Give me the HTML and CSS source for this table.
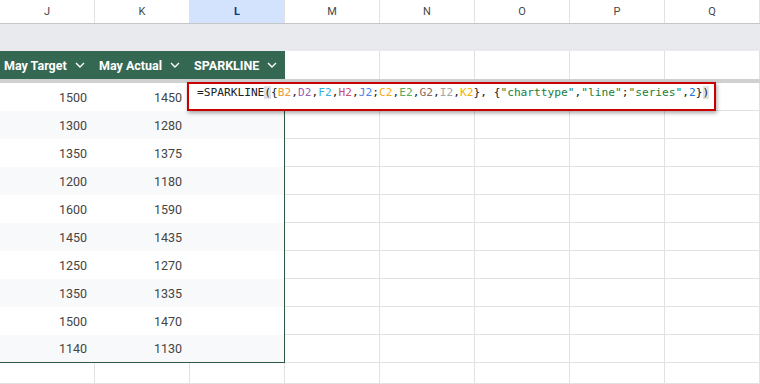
FILE: index.html
```html
<!doctype html>
<html lang="en">
<head>
  <meta charset="UTF-8">
  <title>Sparkline formula</title>
  <link rel="stylesheet" href="styles.css">
</head>
<body>
  <div class="sheet">
    <div class="col-heads">
      <div class="ch">J</div>
      <div class="ch">K</div>
      <div class="ch active">L</div>
      <div class="ch">M</div>
      <div class="ch">N</div>
      <div class="ch">O</div>
      <div class="ch">P</div>
      <div class="ch">Q</div>
    </div>
    <div class="band"></div>

    <div class="row head-row">
      <div class="th">May Target <svg class="chev" viewBox="0 0 10 6"><path d="M1 1l4 4 4-4"/></svg></div>
      <div class="th">May Actual <svg class="chev" viewBox="0 0 10 6"><path d="M1 1l4 4 4-4"/></svg></div>
      <div class="th last">SPARKLINE <svg class="chev" viewBox="0 0 10 6"><path d="M1 1l4 4 4-4"/></svg></div>
      <div class="c"></div><div class="c"></div><div class="c"></div><div class="c"></div><div class="c"></div>
    </div>
    <div class="freeze"></div>

    <div id="rows"></div>

    <div class="row tail-row">
      <div class="c"></div><div class="c"></div><div class="c"></div><div class="c"></div>
      <div class="c"></div><div class="c"></div><div class="c"></div><div class="c"></div>
    </div>

    <div class="editor">
      <span class="fn">=SPARKLINE</span><span class="hl">(</span>{<span class="r1">B2</span>,<span class="r2">D2</span>,<span class="r3">F2</span>,<span class="r4">H2</span>,<span class="r5">J2</span>;<span class="r6">C2</span>,<span class="r7">E2</span>,<span class="r8">G2</span>,<span class="r9">I2</span>,<span class="r10">K2</span>}, {<span class="str">"charttype"</span>,<span class="str">"line"</span>;<span class="str">"series"</span>,<span class="num">2</span>}<span class="hl">)</span>
    </div>
  </div>

  <script>
    const data = [
      [1500, 1450], [1300, 1280], [1350, 1375], [1200, 1180], [1600, 1590],
      [1450, 1435], [1250, 1270], [1350, 1335], [1500, 1470], [1140, 1130]
    ];
    const rows = document.getElementById("rows");

    data.forEach((d, i) => {
      const row = document.createElement("div");
      row.className = "row data-row" + (i % 2 ? " alt" : "") + (i === data.length - 1 ? " end" : "");
      row.innerHTML =
        `<div class="td">${d[0]}</div><div class="td">${d[1]}</div><div class="td last"></div>` +
        `<div class="c"></div><div class="c"></div><div class="c"></div><div class="c"></div><div class="c"></div>`;
      rows.appendChild(row);
    });
  </script>
</body>
</html>
```

FILE: styles.css
```css
* {
  margin: 0;
  padding: 0;
  box-sizing: border-box;
}
body {
  background: #fff;
  font-family: Roboto, "Liberation Sans", sans-serif;
  width: 760px;
  height: 384px;
  overflow: hidden;
}
.sheet {
  position: relative;
  width: 760px;
}
.col-heads {
  display: grid;
  grid-template-columns: repeat(8, 95px);
  height: 24px;
  border-bottom: 1px solid #c4c7c5;
}
.ch {
  display: flex;
  align-items: center;
  justify-content: center;
  border-right: 1px solid #e1e1e1;
  font-size: 11px;
  color: #444746;
}
.ch.active {
  background: #d3e3fd;
  color: #0b3a8a;
  font-weight: 700;
}
.band {
  height: 27px;
  background: #e8eaed;
}
.row {
  display: grid;
  grid-template-columns: repeat(8, 95px);
  height: 28px;
}
.c {
  border-right: 1px solid #e1e1e1;
  border-bottom: 1px solid #e1e1e1;
}
.head-row .c {
  border-bottom: none;
}
.th {
  background: #356853;
  color: #fff;
  font-weight: 700;
  font-size: 12.5px;
  display: flex;
  align-items: center;
  gap: 8px;
  padding-left: 4px;
  white-space: nowrap;
}
.chev {
  width: 10px;
  height: 6px;
  fill: none;
  stroke: #fff;
  stroke-width: 1.4;
}
.freeze {
  height: 4px;
  background: #cfd0d1;
}
.td {
  background: #fff;
  font-size: 12.5px;
  color: #444;
  display: flex;
  align-items: center;
  justify-content: flex-end;
  padding-right: 8px;
}
.alt .td {
  background: #f8f9fa;
}
.td.last {
  border-right: 1px solid #2b5743;
}
.end .td {
  border-bottom: 1px solid #2b5743;
}
.tail-row {
  height: 21px;
}
.editor {
  position: absolute;
  left: 187px;
  top: 82px;
  width: 529px;
  height: 29px;
  background: #fff;
  border: 2px solid #c80000;
  box-shadow: 1px 2px 4px rgba(0,0,0,0.35);
  padding: 1px 0 0 8px;
  font-family: "DejaVu Sans Mono", "Liberation Mono", monospace;
  font-size: 11.2px;
  line-height: 16px;
  color: #202124;
  white-space: nowrap;
}
.hl { background: #e3e3e3; }
.r1 { color: #f29a2e; }
.r2 { color: #9c5fb8; }
.r3 { color: #3aaee0; }
.r4 { color: #c8507a; }
.r5 { color: #4a82e6; }
.r6 { color: #f3ae1a; }
.r7 { color: #58aa5e; }
.r8 { color: #8a6a5c; }
.r9 { color: #a6a6a6; }
.r10 { color: #f2b400; }
.str { color: #188038; }
.num { color: #1a73e8; }
```
